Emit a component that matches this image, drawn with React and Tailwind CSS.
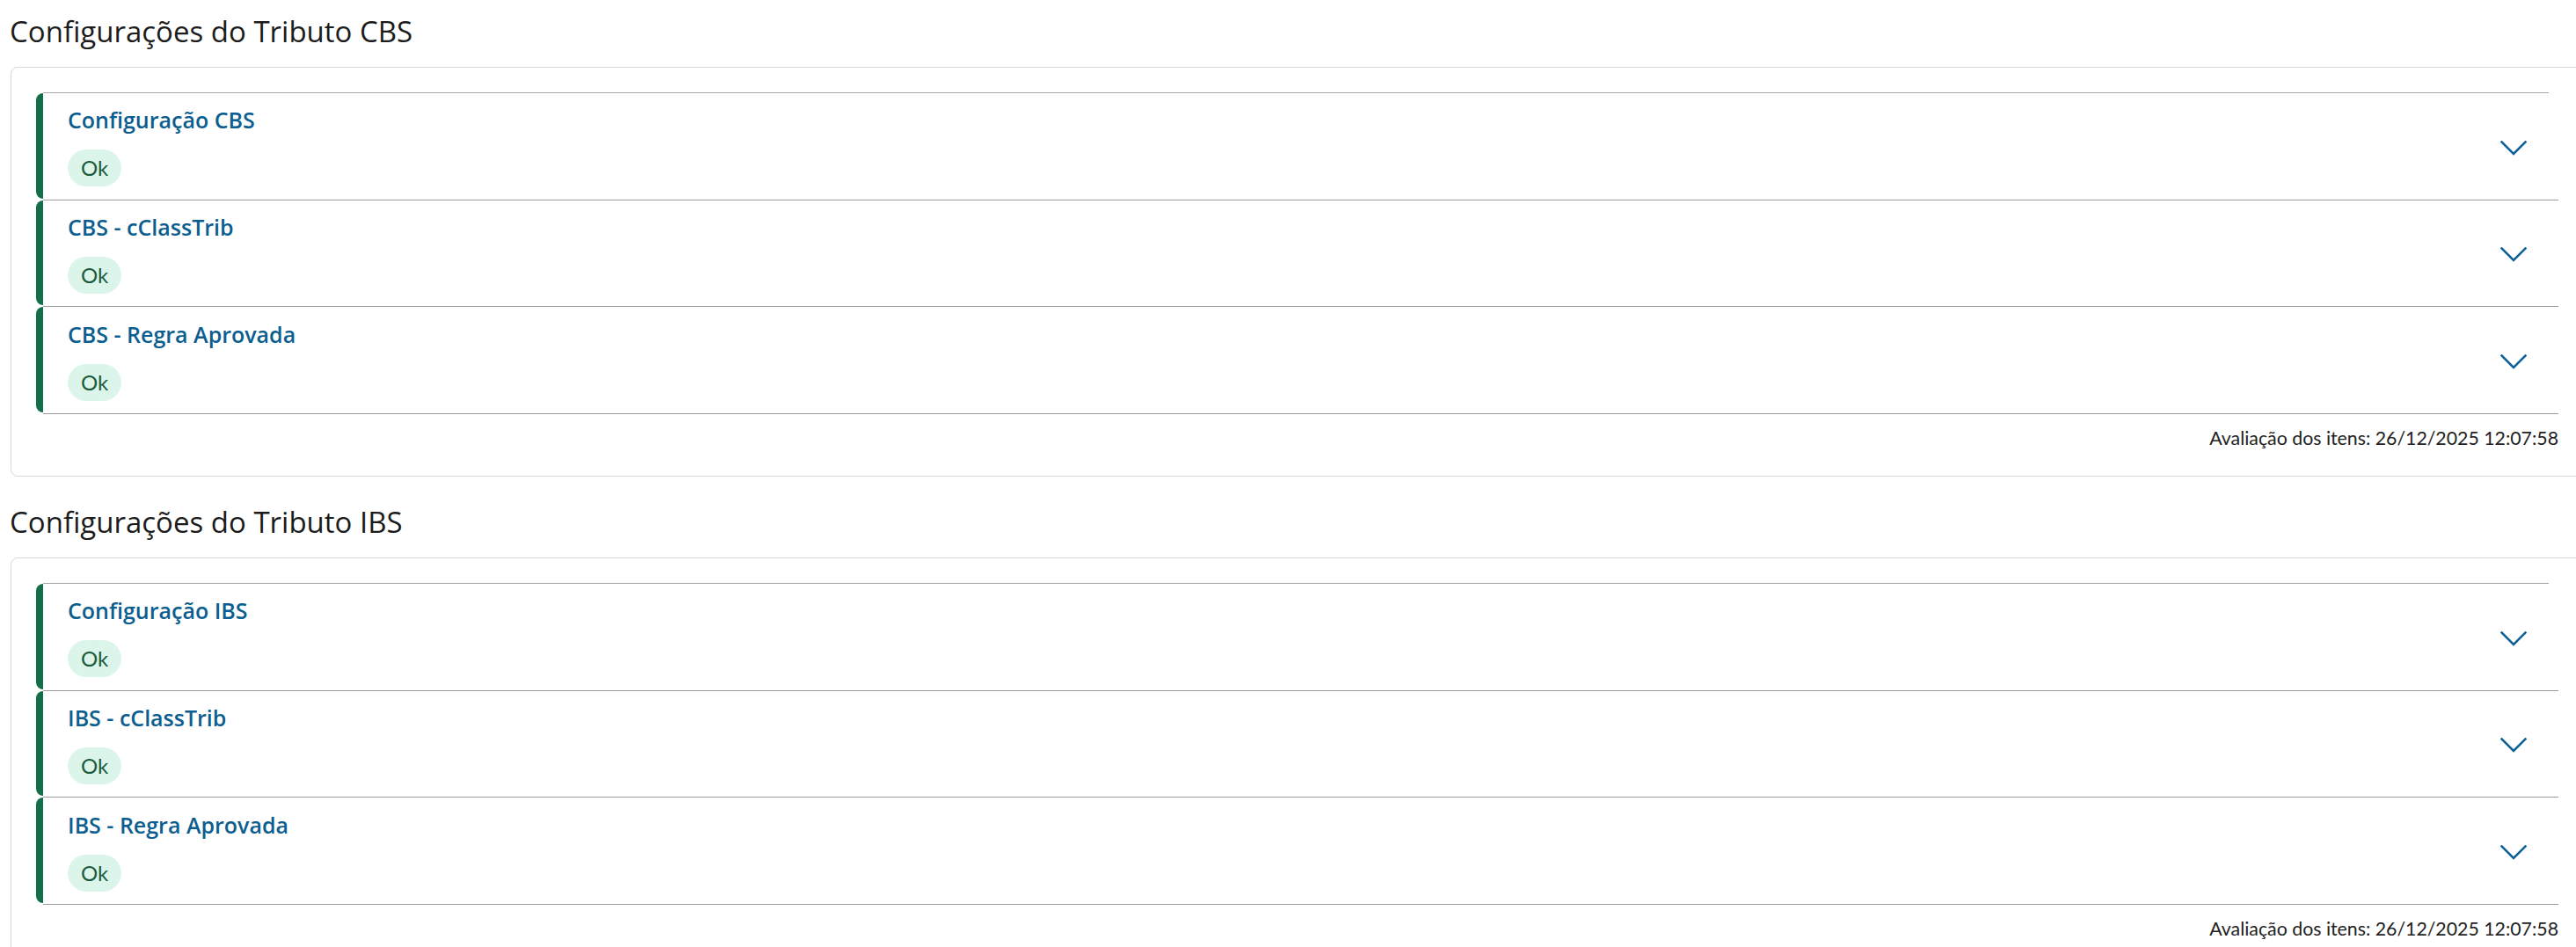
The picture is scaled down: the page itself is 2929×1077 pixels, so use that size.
import React from "react";

function Chevron() {
  return (
    <svg width="30" height="17" viewBox="0 0 30 17" fill="none" className="mt-[4px] shrink-0">
      <path d="M1.5 1.5 L15 15 L28.5 1.5" stroke="#0e6096" strokeWidth="2.6" strokeLinecap="square" strokeLinejoin="miter" />
    </svg>
  );
}

function Item({ title }) {
  return (
    <div className="flex h-[121.67px]">
      <div className="mb-[2px] w-[8px] shrink-0 rounded-l-[9px] bg-[#136f49]" />
      <div className="flex flex-1 items-center border-b border-[#9c9c9c] pl-[28px] pr-[36px]">
        <div className="flex flex-1 flex-col items-start">
          <div className="font-['Open_Sans',sans-serif] text-[25px] font-semibold leading-[32px] text-[#0b5e8f]">
            {title}
          </div>
          <span className="mt-[18px] rounded-full bg-[#dcf5eb] px-[15px] text-[24px] leading-[42px] text-[#1b5b3c]">
            Ok
          </span>
        </div>
        <Chevron />
      </div>
    </div>
  );
}

function Section({ title, items, className }) {
  return (
    <section className={className}>
      <h2 className="ml-[11px] font-['Open_Sans',sans-serif] text-[33px] font-normal leading-[40px] text-[#1c1c1c]">
        {title}
      </h2>
      <div className="ml-[12px] mr-[-9px] mt-[20px] rounded-[8px] border border-[#d6d6d6] px-[28px] pb-[29px] pt-[28px]">
        <div className="ml-[8px] mr-[11px] h-px bg-[#a8a8a8]" />
        {items.map((t) => (
          <Item key={t} title={t} />
        ))}
        <p className="mt-[13px] text-right text-[21.3px] leading-[28px] text-[#222222]">
          Avaliação dos itens: 26/12/2025 12:07:58
        </p>
      </div>
    </section>
  );
}

export default function App() {
  return (
    <div className="min-h-screen w-full overflow-hidden bg-white pt-[16px] font-['Lato',sans-serif]">
      <Section
        title="Configurações do Tributo CBS"
        items={["Configuração CBS", "CBS - cClassTrib", "CBS - Regra Aprovada"]}
      />
      <Section
        className="mt-[32px]"
        title="Configurações do Tributo IBS"
        items={["Configuração IBS", "IBS - cClassTrib", "IBS - Regra Aprovada"]}
      />
    </div>
  );
}
